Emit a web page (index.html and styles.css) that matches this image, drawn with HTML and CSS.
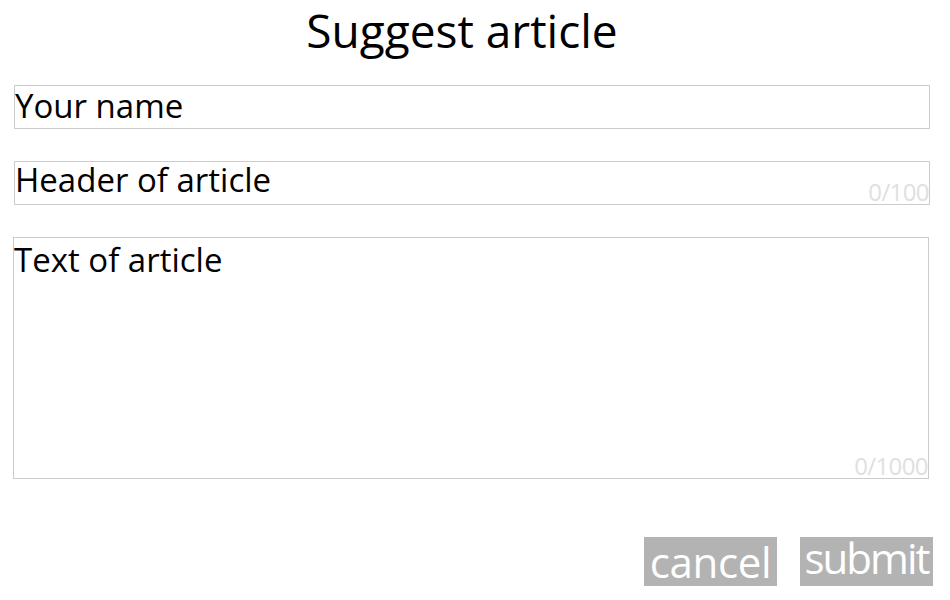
FILE: index.html
```html
<!DOCTYPE html>
<html>
<head>
<meta charset="utf-8">
<link rel="stylesheet" href="styles.css">
</head>
<body>
<div class="page">
  <h1 class="title">Suggest article</h1>
  <div class="field field-name"><span class="label">Your name</span></div>
  <div class="field field-header"><span class="label">Header of article</span><span class="counter">0/100</span></div>
  <div class="field field-text"><span class="label">Text of article</span><span class="counter">0/1000</span></div>
  <div class="actions">
    <button class="btn btn-cancel">cancel</button>
    <button class="btn btn-submit">submit</button>
  </div>
</div>
</body>
</html>
```
FILE: styles.css
```css
html, body { margin: 0; padding: 0; background: #fff; }
body { font-family: "Open Sans", "Noto Sans", sans-serif; color: #000; }
.page { width: 950px; height: 600px; display: flex; flex-direction: column; }
.title { margin: 0; font-weight: 400; font-size: 46px; line-height: 60px; text-align: center; width: 924px; }
.field { position: relative; border: 1px solid #cccccc; margin-left: 14px; width: 914px; box-sizing: content-box; display: flex; align-items: flex-start; }
.label { font-size: 33px; line-height: 40px; letter-spacing: 0; }
.field-name { margin-top: 25px; height: 42px; }
.field-header { margin-top: 32px; height: 42px; }
.field-header .label { line-height: 36px; }
.field-text { margin-top: 32px; height: 240px; margin-left: 13px; }
.field-text .label { line-height: 44px; }
.counter { position: absolute; right: 0; bottom: 0; font-size: 24px; line-height: 24px; color: #e0e0e0; letter-spacing: -0.6px; }
.actions { display: flex; justify-content: flex-end; gap: 23px; margin-top: 58px; padding-right: 17px; }
.btn { border: 0; background: #b3b3b3; color: #fff; font-family: inherit; font-size: 42px; height: 49px; width: 133px; padding: 0; box-sizing: border-box; }
.btn-cancel { line-height: 49px; letter-spacing: -0.3px; }
.btn-submit { line-height: 41px; padding-bottom: 8px; letter-spacing: -2px; }
```
